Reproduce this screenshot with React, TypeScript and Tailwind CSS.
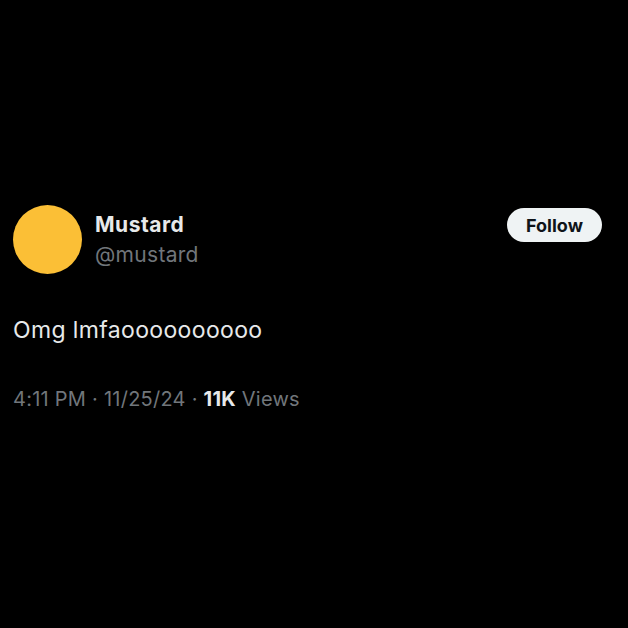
import React from "react";

export default function App() {
  return (
    <div className="w-[628px] h-[628px] bg-black overflow-hidden" style={{ fontFamily: "Inter, 'Noto Sans', sans-serif" }}>
      <div className="pt-[205px] pl-[13px] pr-[26px]">
        <div className="flex items-start">
          <div className="w-[69px] h-[69px] rounded-full bg-[#fbbf36] shrink-0" />
          <div className="ml-[13px] mt-[7px] flex flex-col flex-1">
            <div className="text-[21px] leading-[26px] font-bold tracking-[0.5px] text-[#e7e9ea]">Mustard</div>
            <div className="mt-[4px] text-[21px] leading-[25px] tracking-[0.3px] text-[#71767b]">@mustard</div>
          </div>
          <button className="mt-[3px] w-[95px] h-[34px] rounded-full bg-[#eff3f4] text-[#0f1419] text-[18px] font-bold flex items-center justify-center">
            Follow
          </button>
        </div>
        <div className="mt-[42px] text-[23px] leading-[28px] tracking-[0.36px] text-[#e7e9ea]">Omg lmfaoooooooooo</div>
        <div className="mt-[43px] text-[20px] leading-[24px] tracking-[0.25px] text-[#71767b]">
          4:11 PM · 11/25/24 · <span className="font-bold text-[#e7e9ea]">11K</span> Views
        </div>
      </div>
    </div>
  );
}
